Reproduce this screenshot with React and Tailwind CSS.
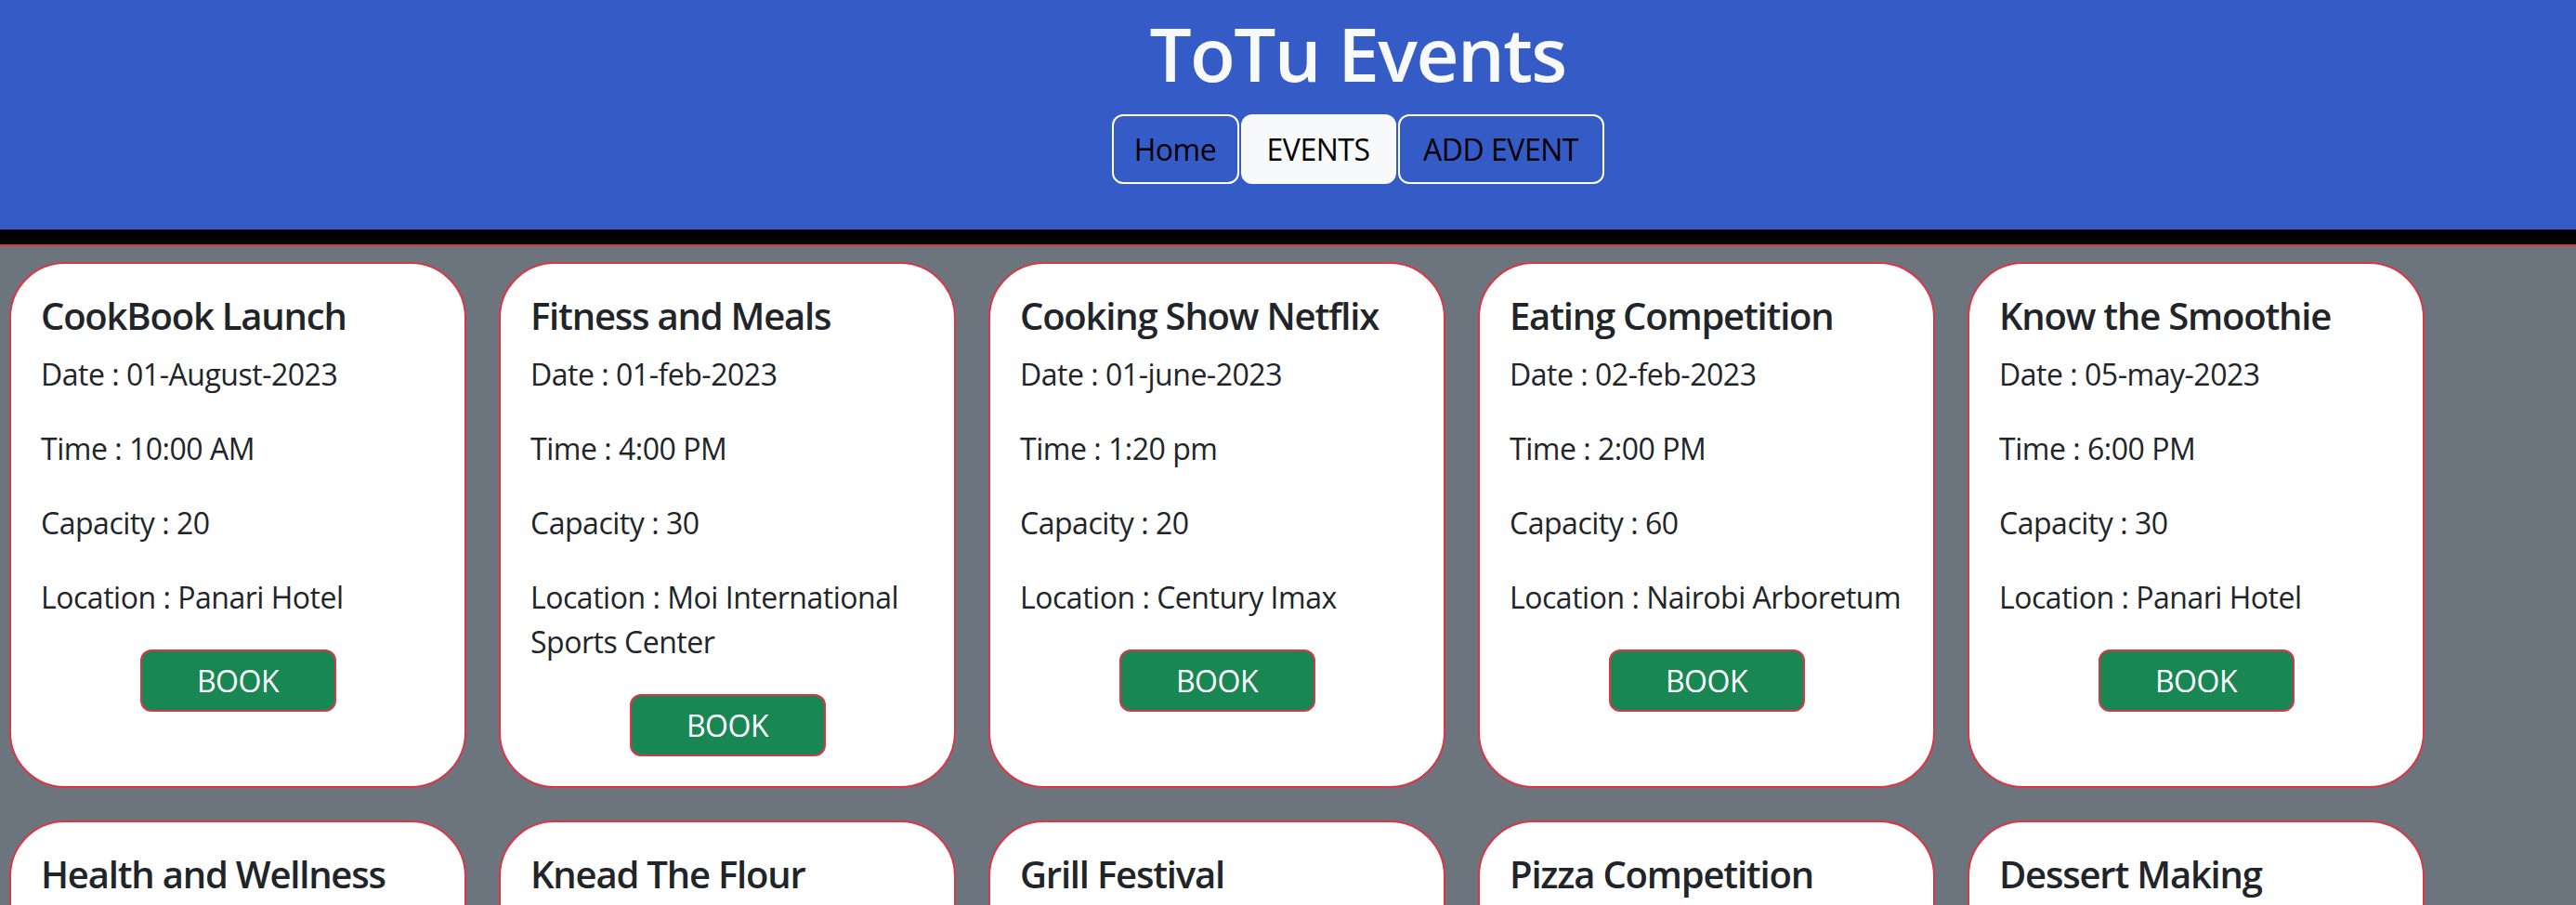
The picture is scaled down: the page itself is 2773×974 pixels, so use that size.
import React from "react";

const events = [
  { title: "CookBook Launch", date: "01-August-2023", time: "10:00 AM", capacity: "20", location: "Panari Hotel" },
  { title: "Fitness and Meals", date: "01-feb-2023", time: "4:00 PM", capacity: "30", location: "Moi International Sports Center" },
  { title: "Cooking Show Netflix", date: "01-june-2023", time: "1:20 pm", capacity: "20", location: "Century Imax" },
  { title: "Eating Competition", date: "02-feb-2023", time: "2:00 PM", capacity: "60", location: "Nairobi Arboretum" },
  { title: "Know the Smoothie", date: "05-may-2023", time: "6:00 PM", capacity: "30", location: "Panari Hotel" },
  { title: "Health and Wellness Expo", date: "10-june-2023", time: "9:00 AM", capacity: "50", location: "KICC" },
  { title: "Knead The Flour", date: "12-june-2023", time: "11:00 AM", capacity: "25", location: "Panari Hotel" },
  { title: "Grill Festival", date: "20-july-2023", time: "3:00 PM", capacity: "80", location: "Uhuru Gardens" },
  { title: "Pizza Competition", date: "05-aug-2023", time: "5:00 PM", capacity: "40", location: "Sarit Centre" },
  { title: "Dessert Making", date: "15-sep-2023", time: "2:00 PM", capacity: "20", location: "Century Imax" },
];

function Card({ e }) {
  return (
    <div className="w-[492px] flex flex-col bg-white border-2 border-[#dc3545] rounded-[60px] p-[32px] text-[#212529]">
      <h5 className="text-[40px] leading-[48px] font-semibold tracking-[-0.03em] mb-[15px]">{e.title}</h5>
      <p className="text-[32px] leading-[48px] mb-[32px]">Date : {e.date}</p>
      <p className="text-[32px] leading-[48px] mb-[32px]">Time : {e.time}</p>
      <p className="text-[32px] leading-[48px] mb-[32px]">Capacity : {e.capacity}</p>
      <p className="text-[32px] leading-[48px] mb-[32px]">Location : {e.location}</p>
      <button className="self-center w-[211px] h-[67px] flex items-center justify-center bg-[#198754] border-2 border-[#dc3545] rounded-[12px] text-white text-[32px] leading-[48px]">
        BOOK
      </button>
    </div>
  );
}

export default function App() {
  return (
    <div className="h-[974px] overflow-hidden bg-[#6c757d] font-['Open_Sans',sans-serif] tracking-[-0.03em]">
      <header className="bg-[#355bc7] border-b-[16px] border-black h-[263px] pl-[150px] pt-[9px] flex flex-col items-center">
        <h1 className="text-[80px] leading-[96px] font-semibold tracking-[-0.02em] text-[#f8f9fa] mb-[18px]">ToTu Events</h1>
        <nav className="flex gap-[2px]">
          <button className="w-[137px] h-[75px] flex items-center justify-center border-2 border-white rounded-[12px] text-black text-[32px] leading-[48px]">Home</button>
          <button className="w-[167px] h-[75px] flex items-center justify-center border-2 border-[#f8f9fa] bg-[#f8f9fa] rounded-[12px] text-black text-[32px] leading-[48px]">EVENTS</button>
          <button className="w-[222px] h-[75px] flex items-center justify-center border-2 border-white rounded-[12px] text-black text-[32px] leading-[48px]">ADD EVENT</button>
        </nav>
      </header>
      <main className="border-t-2 border-[#dc3545] pt-[17px] pl-[10px] flex flex-wrap gap-[35px]">
        {events.map((e) => (
          <Card key={e.title} e={e} />
        ))}
      </main>
    </div>
  );
}
